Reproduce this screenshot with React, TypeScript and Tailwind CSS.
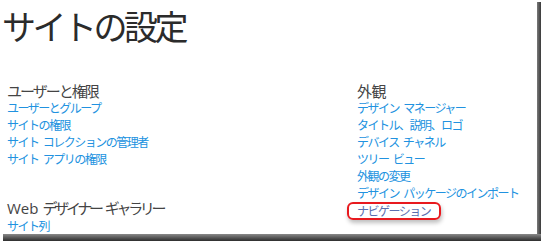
import React from "react";

const jp = '"Noto Sans CJK JP", "Noto Sans", sans-serif';
const web = '"Open Sans", "Noto Sans CJK JP", sans-serif';

const users = ["ユーザーとグループ", "サイトの権限", "サイト コレクションの管理者", "サイト アプリの権限"];
const gallery = ["サイト列", "サイトのコンテンツ タイプ"];
const looks = [
  "デザイン マネージャー",
  "タイトル、説明、ロゴ",
  "デバイス チャネル",
  "ツリー ビュー",
  "外観の変更",
  "デザイン パッケージのインポート",
];

function Heading({ children, className = "" }: { children: React.ReactNode; className?: string }) {
  return (
    <div className={`text-[15px] leading-[17px] text-[#444444] whitespace-nowrap ${className}`}>{children}</div>
  );
}

function LinkItem({ children }: { children: React.ReactNode }) {
  return (
    <div className="text-[12px] leading-[17px] tracking-[-1.5px] [word-spacing:3px] text-[#2192e0] whitespace-nowrap">
      {children}
    </div>
  );
}

export default function App() {
  return (
    <div className="w-[541px] h-[241px] bg-white flex flex-col overflow-hidden" style={{ fontFamily: jp }}>
      <div className="flex flex-1 min-h-0">
        <div className="flex-1 min-w-0">
          <div className="pl-[2px] text-[34px] leading-[51px] tracking-[-3.5px] font-normal text-[#2b2b2b]">
            サイトの設定
          </div>
          <div className="grid grid-cols-[350px_1fr] pl-[7px] mt-[31px]">
            <div>
              <Heading className="tracking-[-2px]">ユーザーと権限</Heading>
              {users.map((u) => (
                <LinkItem key={u}>{u}</LinkItem>
              ))}
              <div className="mt-[32px]">
                <Heading className="tracking-[-3.3px] [word-spacing:4px]">
                  <span style={{ fontFamily: web }} className="tracking-normal">Web</span> デザイナー ギャラリー
                </Heading>
                {gallery.map((g) => (
                  <LinkItem key={g}>{g}</LinkItem>
                ))}
              </div>
            </div>
            <div>
              <Heading className="tracking-[-0.5px]">外観</Heading>
              {looks.map((l) => (
                <LinkItem key={l}>{l}</LinkItem>
              ))}
              <div className="relative mt-[1px] w-fit">
                <div className="text-[12px] leading-[17px] tracking-[-1.5px] text-[#5a6fb0] whitespace-nowrap">
                  ナビゲーション
                </div>
                <div className="absolute left-[-10px] right-[-11px] top-[0px] bottom-[-1px] border-2 border-[#e8191e] rounded-[6px] shadow-[1px_3px_4px_rgba(0,0,0,0.25)]" />
              </div>
            </div>
          </div>
        </div>
        <div className="w-[4px] mt-[2px] bg-gradient-to-r from-[#7a7a7a] to-[#3a3a3a]" />
      </div>
      <div className="h-[7px] ml-[3px] bg-gradient-to-b from-[#8a8a8a] to-[#2e2e2e]" />
    </div>
  );
}
